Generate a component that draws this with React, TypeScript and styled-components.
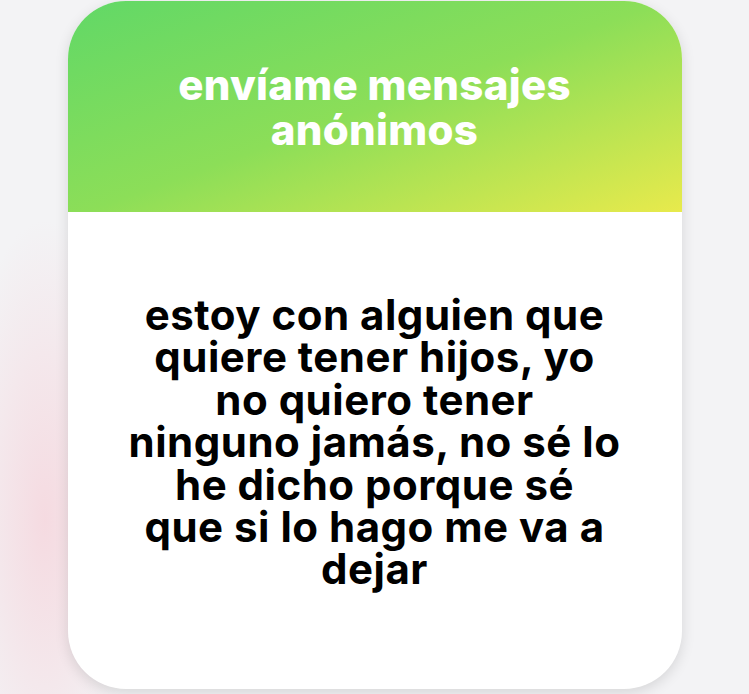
import React from "react";
import styled, { createGlobalStyle } from "styled-components";

const GlobalStyle = createGlobalStyle`
  html, body {
    margin: 0;
    padding: 0;
  }
  body {
    width: 749px;
    height: 694px;
    overflow: hidden;
    font-family: Inter, "Noto Sans", sans-serif;
  }
`;

const Page = styled.div`
  width: 749px;
  height: 694px;
  background:
    radial-gradient(ellipse 90px 300px at 45px 520px, rgba(246, 210, 218, 0.75), rgba(246, 210, 218, 0) 100%),
    #f3f3f5;
  display: flex;
  justify-content: center;
  align-items: flex-start;
  padding-top: 1px;
  box-sizing: border-box;
`;

const Card = styled.div`
  width: 614px;
  height: 688px;
  border-radius: 58px;
  overflow: hidden;
  background: #ffffff;
  box-shadow: 0 4px 14px rgba(0, 0, 0, 0.12);
  display: flex;
  flex-direction: column;
`;

const Header = styled.div`
  height: 211px;
  flex-shrink: 0;
  background: linear-gradient(160deg, #61d867 0%, #8cde58 50%, #e8ea4c 100%);
  display: flex;
  align-items: flex-start;
  justify-content: center;
  padding-top: 61px;
  box-sizing: border-box;
`;

const Title = styled.h1`
  margin: 0;
  color: #ffffff;
  font-family: Inter, "Noto Sans", sans-serif;
  font-weight: 800;
  font-size: 42px;
  line-height: 45px;
  letter-spacing: 0.3px;
  text-align: center;
  white-space: nowrap;
`;

const Body = styled.div`
  flex: 1;
  display: flex;
  justify-content: center;
  padding-top: 82px;
  box-sizing: border-box;
`;

const Message = styled.p`
  margin: 0;
  color: #000000;
  font-family: Inter, "Noto Sans", sans-serif;
  font-weight: 700;
  font-size: 42px;
  line-height: 42.4px;
  letter-spacing: 0.5px;
  text-align: center;
  white-space: nowrap;
`;

const lines = [
  "estoy con alguien que",
  "quiere tener hijos, yo",
  "no quiero tener",
  "ninguno jamás, no sé lo",
  "he dicho porque sé",
  "que si lo hago me va a",
  "dejar",
];

export default function App() {
  return (
    <>
      <GlobalStyle />
      <Page>
        <Card>
          <Header>
            <Title>
              envíame mensajes
              <br />
              anónimos
            </Title>
          </Header>
          <Body>
            <Message>
              {lines.map((line, i) => (
                <React.Fragment key={i}>
                  {line}
                  {i < lines.length - 1 && <br />}
                </React.Fragment>
              ))}
            </Message>
          </Body>
        </Card>
      </Page>
    </>
  );
}
